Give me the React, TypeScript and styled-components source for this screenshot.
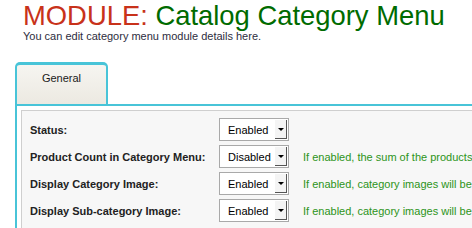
import React from 'react';
import styled, { createGlobalStyle } from 'styled-components';

const GlobalStyle = createGlobalStyle`
  html, body {
    margin: 0;
    padding: 0;
    background: #ffffff;
    font-family: Arial, "Liberation Sans", sans-serif;
    overflow: hidden;
  }
`;

const rows = [
  { label: 'Status:', value: 'Enabled', help: '' },
  {
    label: 'Product Count in Category Menu:',
    value: 'Disabled',
    help: 'If enabled, the sum of the products in each category will be displayed',
  },
  {
    label: 'Display Category Image:',
    value: 'Enabled',
    help: 'If enabled, category images will be displayed',
  },
  {
    label: 'Display Sub-category Image:',
    value: 'Enabled',
    help: 'If enabled, category images will be displayed',
  },
];

const Page = styled.div`
  width: 472px;
  height: 228px;
  overflow: hidden;
`;

const Header = styled.div`
  padding: 2px 0 0 23px;
`;

const Title = styled.h1`
  margin: 0;
  font-size: 27.4px;
  font-weight: normal;
  line-height: 28px;
  white-space: nowrap;
  color: #006b00;
`;

const Module = styled.span`
  color: #c8321a;
`;

const Subtitle = styled.p`
  margin: 0;
  font-size: 11px;
  line-height: 13px;
  color: #2d2d40;
`;

const Tabs = styled.div`
  display: flex;
  margin: 19px 0 0 15px;
`;

const Tab = styled.div`
  width: 93px;
  height: 42px;
  box-sizing: border-box;
  border: 2px solid #48c4d8;
  border-top-width: 3px;
  border-bottom: none;
  border-radius: 5px 5px 0 0;
  background: linear-gradient(#f6f5f1, #ece9e1);
  font-size: 11px;
  color: #1a1a1a;
  text-align: center;
  padding-top: 7px;
`;

const Panel = styled.div`
  margin-left: 15px;
  border-top: 2px solid #48c4d8;
  border-left: 2px solid #48c4d8;
  padding: 4px 0 0 4px;
`;

const Form = styled.div`
  border: 1px solid #cfcfcf;
  border-right: none;
  background: #f7f7f7;
  padding: 7px 0 0 8px;
  display: grid;
  grid-template-columns: 175px 70px auto;
  column-gap: 14px;
  row-gap: 4px;
  align-items: center;
  align-content: start;
  white-space: nowrap;
  height: 200px;
`;

const Label = styled.div`
  font-size: 11px;
  font-weight: bold;
  color: #222222;
`;

const Select = styled.div`
  height: 23px;
  box-sizing: border-box;
  border: 1px solid #a9a9a9;
  background: #ffffff;
  display: flex;
  align-items: center;
  justify-content: space-between;
  padding-left: 8px;
  font-size: 11px;
  color: #000000;
`;

const Arrow = styled.div`
  width: 12px;
  height: 19px;
  margin-right: 1px;
  background: #f4f4f4;
  border-right: 1px solid #555555;
  border-bottom: 1px solid #555555;
  display: flex;
  align-items: center;
  justify-content: center;
  box-sizing: border-box;

  &::after {
    content: '';
    border-left: 3px solid transparent;
    border-right: 3px solid transparent;
    border-top: 3px solid #000000;
  }
`;

const Help = styled.div`
  font-size: 11px;
  color: #2c9420;
`;

export default function App() {
  return (
    <Page>
      <GlobalStyle />
      <Header>
        <Title>
          <Module>MODULE:</Module> Catalog Category Menu
        </Title>
        <Subtitle>You can edit category menu module details here.</Subtitle>
      </Header>
      <Tabs>
        <Tab>General</Tab>
      </Tabs>
      <Panel>
        <Form>
          {rows.map((r) => (
            <React.Fragment key={r.label}>
              <Label>{r.label}</Label>
              <Select>
                {r.value}
                <Arrow />
              </Select>
              <Help>{r.help}</Help>
            </React.Fragment>
          ))}
        </Form>
      </Panel>
    </Page>
  );
}
